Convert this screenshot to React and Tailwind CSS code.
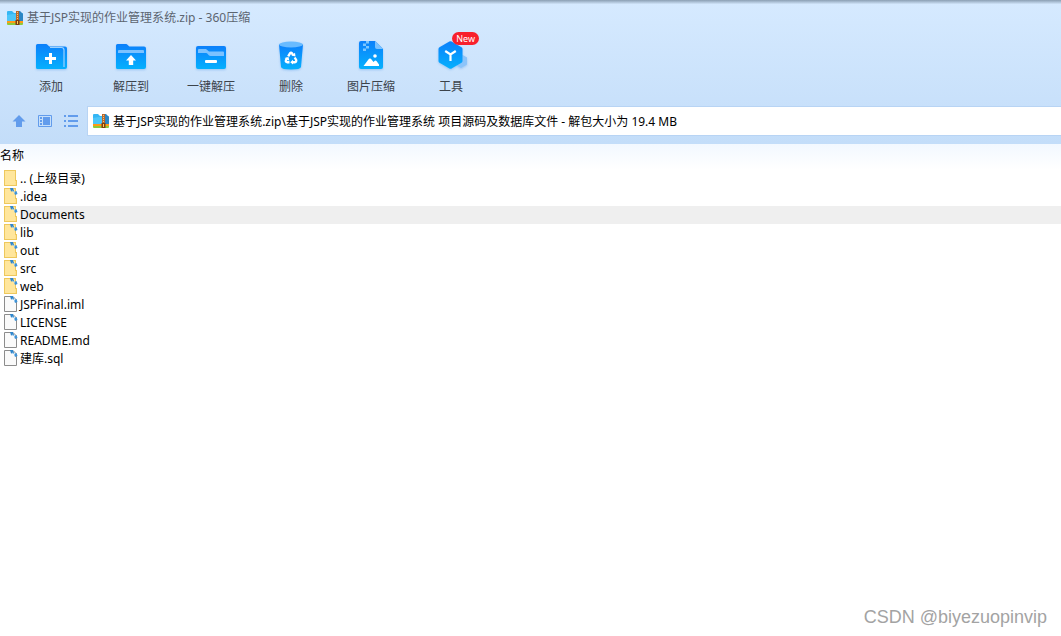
import React from "react";

const ROOT = ".. (上级目录)";
const files = [
  { name: ROOT, kind: "up" },
  { name: ".idea", kind: "folder" },
  { name: "Documents", kind: "folder", active: true },
  { name: "lib", kind: "folder" },
  { name: "out", kind: "folder" },
  { name: "src", kind: "folder" },
  { name: "web", kind: "folder" },
  { name: "JSPFinal.iml", kind: "file" },
  { name: "LICENSE", kind: "file" },
  { name: "README.md", kind: "file" },
  { name: "建库.sql", kind: "file" },
];

function ZipIcon() {
  return (
    <svg className="size-4 shrink-0" viewBox="0 0 16 16" aria-hidden="true">
      <path d="M0 2Q0 1 1 1H5L7 3H15Q16 3 16 4V11H0Z" fill="#35b6f4" />
      <path d="M0 5L6 4H9V11H0Z" fill="#4cc6fa" />
      <path d="M12 1h1l3 3v7h-4z" fill="#2b86c4" />
      <path d="M0 11H16V13H0Z" fill="#ff9a16" />
      <path d="M0 13H16V14Q16 15 15 15H1Q0 15 0 14Z" fill="#8fc93a" />
      <path d="M9 1h3v9H9z" fill="#b8682c" />
      <path d="M10 2h1v1h-1zM10 4h1v1h-1zM10 6h1v1h-1zM10 8h1v1h-1z" fill="#f5c580" />
      <path d="M8.500 10h4v5h-4z" fill="#7c3d12" />
      <path d="M10 11h1v3h-1z" fill="#ffcf55" />
    </svg>
  );
}

function Blue({ id }) {
  return (
    <defs>
      <linearGradient id={id} x1="0" y1="0" x2="0" y2="1">
        <stop offset="0" stopColor="#0c80fb" />
        <stop offset="1" stopColor="#05b0fd" />
      </linearGradient>
    </defs>
  );
}

const iconClass = "size-8 drop-shadow-[0_1px_1px_rgba(60,140,230,0.35)]";

function AddIcon() {
  return (
    <svg className={iconClass} viewBox="0 0 32 32" aria-hidden="true">
      <Blue id="g-add" />
      <path d="M1 4.500Q1 3 2.500 3H11Q12 3 12.700 3.900L14.300 5.500H30Q32 5.500 32 7.500V26Q32 28 30 28H2.500Q1 28 1 26.500Z" fill="url(#g-add)" />
      <path d="M15 6.500H26.500Q29 6.500 29 9V26" fill="none" stroke="#9bd2ff" strokeWidth="1.200" />
      <path d="M14 12h3v4h4v3h-4v4h-3v-4h-4v-3h4z" fill="#fff" />
    </svg>
  );
}

function ExtractIcon() {
  return (
    <svg className={iconClass} viewBox="0 0 32 32" aria-hidden="true">
      <Blue id="g-ext" />
      <path d="M1 4.500Q1 3 2.500 3H11Q12 3 12.700 3.900L14.300 5.500H29Q31 5.500 31 7.500V26Q31 28 29 28H2.500Q1 28 1 26.500Z" fill="url(#g-ext)" />
      <path d="M3 11V10Q3 9 4 9H28Q29 9 29 10V12H3Z" fill="#7cc2ff" />
      <path d="M16 14L21 19.500H18.200V24H13.800V19.500H11Z" fill="#fff" />
    </svg>
  );
}

function OneKeyIcon() {
  return (
    <svg className={iconClass} viewBox="0 0 32 32" aria-hidden="true">
      <Blue id="g-one" />
      <rect x="1" y="5" width="30" height="23" rx="2" fill="url(#g-one)" />
      <path d="M3 9Q3 8 4 8H11L14 10.500H28Q29 10.500 29 11.500V15H15.500Q14.500 15 13.800 14.200L12 12.300Q11.500 12 11 12H3Z" fill="#7cc2ff" />
      <rect x="10" y="19" width="12" height="3" rx="1" fill="#fff" />
    </svg>
  );
}

function TrashIcon() {
  return (
    <svg className={iconClass} viewBox="0 0 32 32" aria-hidden="true">
      <Blue id="g-del" />
      <path d="M4 3.500H28L26 26Q25.500 28.500 16 28.500T6 26Z" fill="url(#g-del)" />
      <ellipse cx="16" cy="3.500" rx="12" ry="3" fill="#69bbff" />
      <g fill="none" stroke="#fff" strokeWidth="2.400" strokeLinejoin="round">
        <path d="M13.200 15.300L15 12.300Q16 11.200 17 12.300L18.200 14.200" />
        <path d="M19.700 16.500L21.200 19Q21.500 21 19.800 21.200H17.500" />
        <path d="M14.500 21.200H12Q10.300 20.800 11 19.200L12.200 17.200" />
      </g>
      <path d="M16.500 14.500L20.500 15.500L20 11.800ZM18 18.800V23.500L15.200 21.200ZM9.500 17L13.500 16L14.300 19.800Z" fill="#fff" />
    </svg>
  );
}

function ImageZipIcon() {
  return (
    <svg className={iconClass} viewBox="0 0 32 32" aria-hidden="true">
      <Blue id="g-img" />
      <path d="M4 2Q4 0 6 0H20L28 8V26Q28 28 26 28H6Q4 28 4 26Z" fill="url(#g-img)" />
      <path d="M20 0L28 8H22Q20 8 20 6Z" fill="#7cc2ff" />
      <path d="M11 0h3v2.500h-3zM8 2.500h3V5H8zM11 5h3v2.500h-3zM8 7.500h3V10H8z" fill="#7cc6ff" />
      <circle cx="20" cy="15" r="1.800" fill="#fff" />
      <path d="M8.500 25L14 17.800Q15 17 15.900 17.800L18.500 21L19.800 19.800Q20.700 19.300 21.500 20L24 23.500V25Z" fill="#fff" />
    </svg>
  );
}

function ToolsIcon() {
  return (
    <svg className={iconClass} viewBox="0 0 32 32" aria-hidden="true">
      <Blue id="g-tool" />
      <path d="M26 13L32 16.500V23.500L26 27L22 24.500V15Z" fill="#8cc4fa" />
      <path d="M14.400 .500Q15.500 0 16.600 .500L26.500 6.200Q27.500 7 27.500 8V20Q27.500 21 26.500 21.800L16.600 27.500Q15.500 28 14.400 27.500L4.500 21.800Q3.500 21 3.500 20V8Q3.500 7 4.500 6.200Z" fill="url(#g-tool)" />
      <path d="M10.200 10L15.500 13.500L20.800 10M15.500 13.500V20" fill="none" stroke="#fff" strokeWidth="2.200" />
    </svg>
  );
}

const tools = [
  { label: "添加", Icon: AddIcon },
  { label: "解压到", Icon: ExtractIcon },
  { label: "一键解压", Icon: OneKeyIcon },
  { label: "删除", Icon: TrashIcon },
  { label: "图片压缩", Icon: ImageZipIcon },
  { label: "工具", Icon: ToolsIcon, badge: "New" },
];

function FileIcon({ kind }) {
  return (
    <svg className="block h-[18px] w-4" viewBox="0 0 16 18" aria-hidden="true">
      {kind === "file" ? (
        <path d="M.500 .500H9L12.500 4V15.500H.500Z" fill="#fafafa" stroke="#8c8c8c" />
      ) : (
        <>
          <path d="M0 0H12V10H13V16H0Z" fill="#eec85c" />
          <path d="M1 1H11V15H1Z" fill="#ffe69c" />
          <path d="M11 11H12V15H11Z" fill="#ffe08a" />
        </>
      )}
      {kind !== "up" && (
        <>
          <path d="M6 0H9L10 3L7 3.500Z" fill="#2f86cc" />
          <path d="M10 4L12.500 3L13.500 6L11 7Z" fill="#3f93d8" />
          <path d="M8.500 2.500L11 5" stroke="#8cc4ee" />
        </>
      )}
    </svg>
  );
}

export default function App() {
  return (
    <div className="relative flex min-h-screen flex-col bg-white font-['Noto_Sans','Noto_Sans_CJK_SC',sans-serif] text-xs text-black">
      <header className="bg-linear-to-b from-[#d6eaff] to-[#c3ddf9] pb-2">
        <div className="h-1 bg-linear-to-b from-[#8b9fb3] to-[#d0e4f9]" />
        <h1 className="flex h-7 items-center gap-1 pl-[7px] font-normal text-[#5c6570]">
          <ZipIcon />
          <span>基于JSP实现的作业管理系统.zip - 360压缩</span>
        </h1>
        <div className="flex h-[74px] pl-[11px]">
          {tools.map(({ label, Icon, badge }) => (
            <button key={label} type="button" className="relative flex w-20 flex-col items-center gap-1 pt-[9px] text-[#3c434b]">
              <Icon />
              <span className="leading-5">{label}</span>
              {badge && (
                <span className="absolute top-0 right-3 h-[13px] rounded-full bg-[#f8202c] px-1 text-[9px] leading-[13px] text-white">
                  {badge}
                </span>
              )}
            </button>
          ))}
        </div>
        <div className="flex h-[30px] items-center">
          <nav className="flex w-[87px] shrink-0 items-center gap-[10px] pl-[11px] text-[#629cec]">
            <button type="button" aria-label="向上">
              <svg className="size-4" viewBox="0 0 16 16" aria-hidden="true">
                <path d="M8 2L14.500 8.500H11V14H5V8.500H1.500Z" fill="currentColor" />
              </svg>
            </button>
            <button type="button" aria-label="预览">
              <svg className="size-4" viewBox="0 0 16 16" aria-hidden="true">
                <path d="M1.500 2.500H14.500V13.500H1.500Z" fill="none" stroke="currentColor" />
                <path d="M3 4h2v2H3zM3 7h2v2H3zM3 10h2v2H3zM6 4h7v8H6z" fill="currentColor" />
              </svg>
            </button>
            <button type="button" aria-label="列表">
              <svg className="size-4" viewBox="0 0 16 16" aria-hidden="true">
                <path d="M1 2h2v2H1zM5 2h10v2H5zM1 7h2v2H1zM5 7h10v2H5zM1 12h2v2H1zM5 12h10v2H5z" fill="currentColor" />
              </svg>
            </button>
          </nav>
          <div className="flex h-full min-w-0 flex-1 items-center gap-1 border-y border-l border-[#b8d4f4] bg-white pl-[5px]">
            <ZipIcon />
            <input
              aria-label="路径"
              readOnly
              className="min-w-0 flex-1 bg-transparent pt-0.5 outline-none"
              value={"基于JSP实现的作业管理系统.zip\\基于JSP实现的作业管理系统 项目源码及数据库文件 - 解包大小为 19.4 MB"}
            />
          </div>
        </div>
      </header>

      <main className="flex-1">
        <table className="w-full border-collapse">
          <thead>
            <tr className="h-[26px] bg-linear-to-b from-[#f2f8ff] to-white">
              <th scope="col" colSpan={2} className="p-0 pb-0.5 text-left leading-[18px] font-normal">
                名称
              </th>
            </tr>
          </thead>
          <tbody>
            {files.map(({ name, kind, active }) => (
              <tr key={name} className="h-[18px]">
                <td className="w-5 p-0 pl-1">
                  <FileIcon kind={kind} />
                </td>
                <td className={active ? "bg-[#efefef] p-0 leading-[18px]" : "p-0 leading-[18px]"}>{name}</td>
              </tr>
            ))}
          </tbody>
        </table>
      </main>

      <div className="absolute right-[14px] bottom-[7px] font-['Liberation_Sans',sans-serif] text-lg leading-6 text-[#a3a3a3]">
        CSDN @biyezuopinvip
      </div>
    </div>
  );
}
